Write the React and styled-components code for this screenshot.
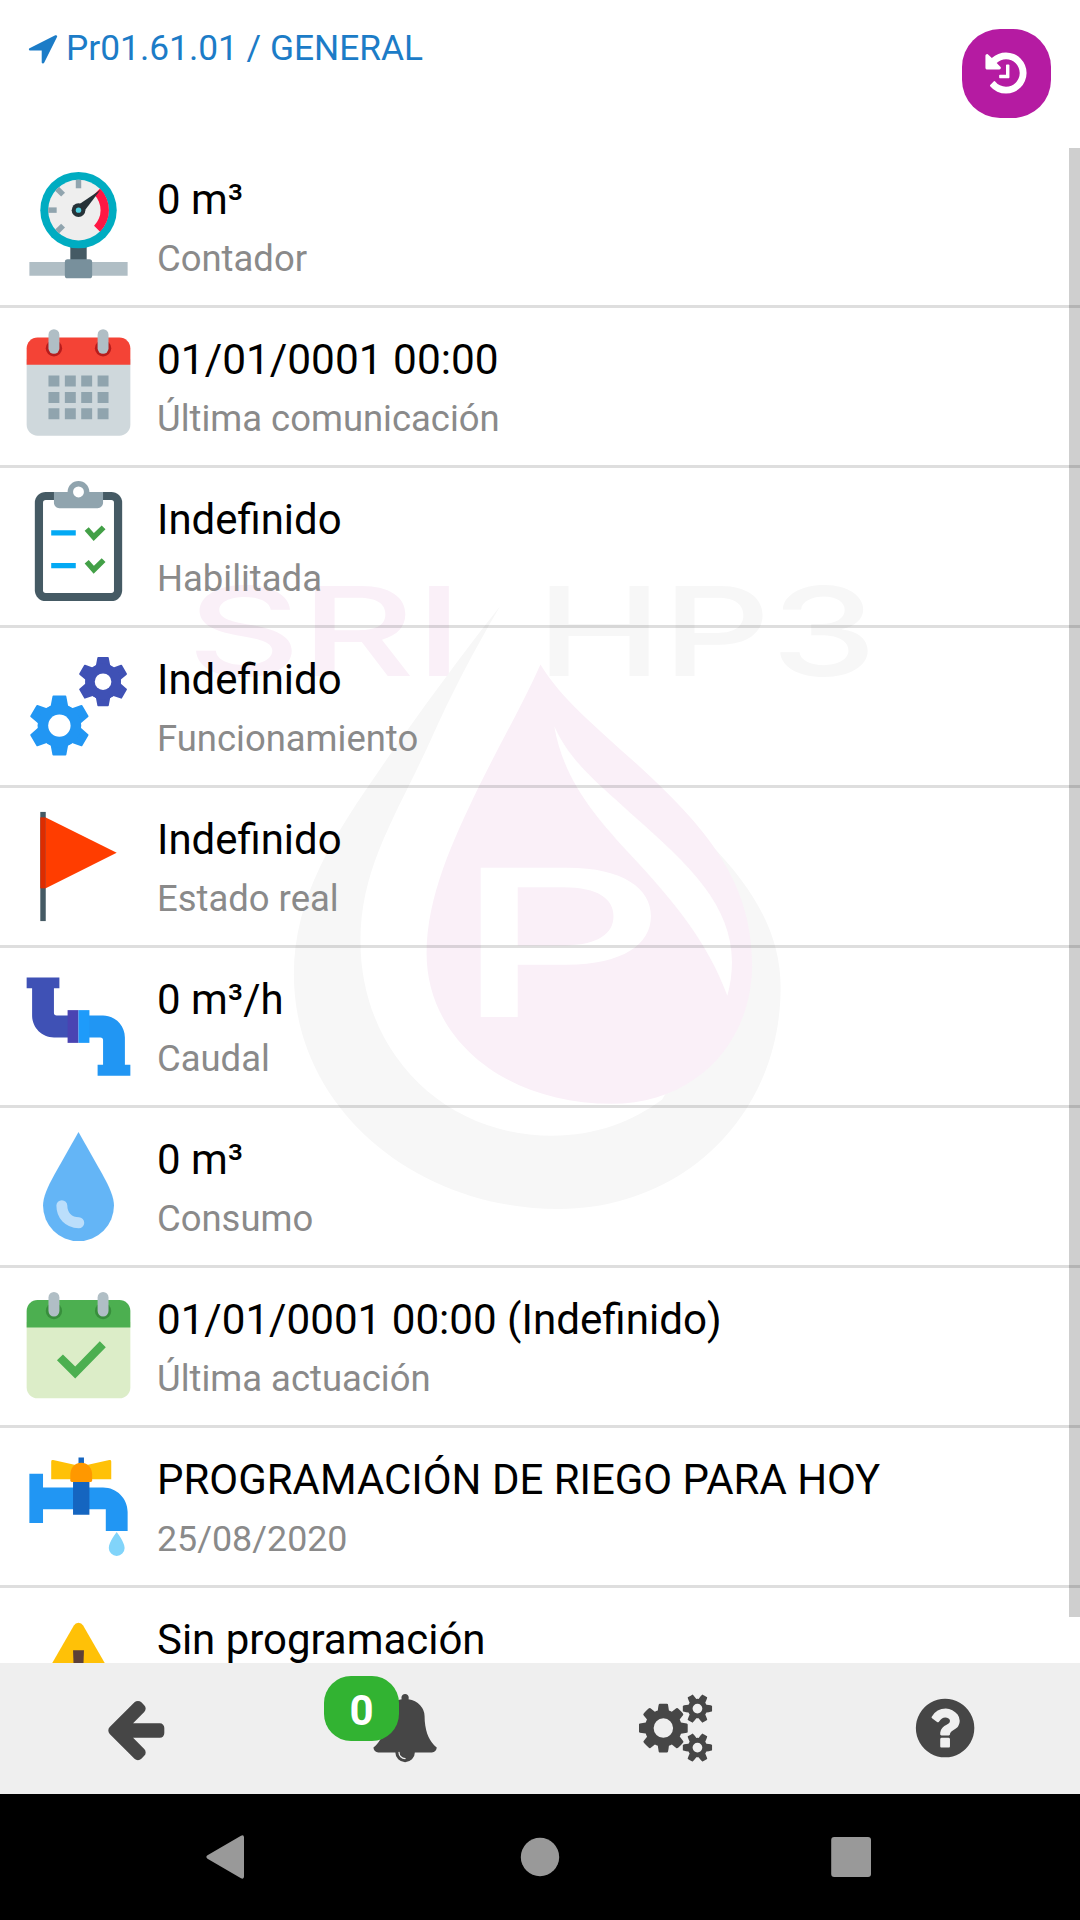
import React from "react";

import styled, { createGlobalStyle } from "styled-components";

const rows = [
 { icon: "meter", title: "0 m³", subtitle: "Contador" },
 {
  icon: "calendar",
  title: "01/01/0001 00:00",
  titleSize: 42.4,
  subtitle: "Última comunicación",
 },
 { icon: "clipboard", title: "Indefinido", subtitle: "Habilitada" },
 { icon: "gears", title: "Indefinido", subtitle: "Funcionamiento" },
 { icon: "flag", title: "Indefinido", subtitle: "Estado real" },
 { icon: "pipe", title: "0 m³/h", subtitle: "Caudal" },
 { icon: "drop", title: "0 m³", subtitle: "Consumo" },
 {
  icon: "calendarCheck",
  title: "01/01/0001 00:00 (Indefinido)",
  titleSize: 42.15,
  subtitle: "Última actuación",
 },
 {
  icon: "tap",
  title: "PROGRAMACIÓN DE RIEGO PARA HOY",
  subtitle: "25/08/2020",
  subtitleSize: 35.8,
 },
 { icon: "warning", title: "Sin programación", subtitle: "" },
];

const glyphs = {
 location:
  "M1593 349l-640 1280q-17 35-57 35-5 0-15-2-22-5-35.5-22.5t-13.5-39.5v-576h-576q-22 0-39.5-13.5t-22.5-35.5 4-42 29-30l1280-640q13-7 29-7 27 0 45 19 15 14 18.5 34.5t-6.5 39.5z",
 history:
  "M1664 896q0 156-61 298t-164 245-245 164-298 61q-172 0-327-72.5t-264-204.5q-7-10-6.5-22.5t8.5-20.5l137-138q10-9 25-9 16 2 23 12 73 95 179 147t225 52q104 0 198.5-40.5t163.5-109.5 109.5-163.5 40.5-198.5-40.5-198.5-109.5-163.5-163.5-109.5-198.5-40.5q-98 0-188 35.5t-160 101.5l137 138q31 30 14 69-17 40-59 40h-448q-26 0-45-19t-19-45v-448q0-42 40-59 39-17 69 14l130 129q107-101 244.5-156.5t284.5-55.5q156 0 298 61t245 164 164 245 61 298zm-640-288v448q0 14-9 23t-23 9h-320q-14 0-23-9t-9-23v-64q0-14 9-23t23-9h224v-352q0-14 9-23t23-9h64q14 0 23 9t9 23z",
 back: "M1664 896v128q0 53-32.5 90.5t-84.5 37.5h-704l293 294q38 36 38 90t-38 90l-75 76q-37 37-90 37-52 0-91-37l-651-652q-37-37-37-90 0-52 37-91l651-650q38-38 91-38 52 0 90 38l75 74q38 38 38 91t-38 91l-293 293h704q52 0 84.5 37.5t32.5 90.5z",
 bell: "M912 1696q0-16-16-16-59 0-101.5-42.5t-42.5-101.5q0-16-16-16t-16 16q0 73 51.5 124.5t124.5 51.5q16 0 16-16zm816-288q0 52-38 90t-90 38h-448q0 106-75 181t-181 75-181-75-75-181h-448q-52 0-90-38t-38-90q50-42 91-88t85-119.5 74.5-158.5 50-206 19.5-260q0-152 117-282.5t307-158.5q-8-19-8-39 0-40 28-68t68-28 68 28 28 68q0 20-8 39 190 28 307 158.5t117 282.5q0 139 19.5 260t50 206 74.5 158.5 85 119.5 91 88z",
 cogs: "M896 896q0-106-75-181t-181-75-181 75-75 181 75 181 181 75 181-75 75-181zm768 512q0-52-38-90t-90-38-90 38-38 90q0 53 37.5 90.5t90.5 37.5 90.5-37.5 37.5-90.5zm0-1024q0-52-38-90t-90-38-90 38-38 90q0 53 37.5 90.5t90.5 37.5 90.5-37.5 37.5-90.5zm-384 421v185q0 10-7 19.5t-16 10.5l-155 24q-11 35-32 76 34 48 90 115 7 11 7 20 0 12-7 19-23 30-82.5 89.5t-78.5 59.5q-11 0-21-7l-115-90q-37 19-77 31-11 108-23 155-7 24-30 24h-186q-11 0-20-7.5t-10-17.5l-23-153q-34-10-75-31l-118 89q-7 7-20 7-11 0-21-8-144-133-144-160 0-9 7-19 10-14 41-53t47-61q-23-44-35-82l-152-24q-10-1-17-9.5t-7-19.5v-185q0-10 7-19.5t16-10.5l155-24q11-35 32-76-34-48-90-115-7-11-7-20 0-12 7-20 22-30 82-89t79-59q11 0 21 7l115 90q34-18 77-32 11-108 23-154 7-24 30-24h186q11 0 20 7.5t10 17.5l23 153q34 10 75 31l118-89q8-7 20-7 11 0 21 8 144 133 144 160 0 8-7 19-12 16-42 54t-45 60q23 48 34 82l152 23q10 2 17 10.5t7 19.5zm640 533v140q0 16-149 31-12 27-30 52 51 113 51 138 0 4-4 7-122 71-124 71-8 0-46-47t-52-68q-20 2-30 2t-30-2q-14 21-52 68t-46 47q-2 0-124-71-4-3-4-7 0-25 51-138-18-25-30-52-149-15-149-31v-140q0-16 149-31 13-29 30-52-51-113-51-138 0-4 4-7 4-2 35-20t59-34 30-16q8 0 46 46.5t52 67.5q20-2 30-2t30 2q51-71 92-112l6-2q4 0 124 70 4 3 4 7 0 25-51 138 17 23 30 52 149 15 149 31zm0-1024v140q0 16-149 31-12 27-30 52 51 113 51 138 0 4-4 7-122 71-124 71-8 0-46-47t-52-68q-20 2-30 2t-30-2q-14 21-52 68t-46 47q-2 0-124-71-4-3-4-7 0-25 51-138-18-25-30-52-149-15-149-31v-140q0-16 149-31 13-29 30-52-51-113-51-138 0-4 4-7 4-2 35-20t59-34 30-16q8 0 46 46.5t52 67.5q20-2 30-2t30 2q51-71 92-112l6-2q4 0 124 70 4 3 4 7 0 25-51 138 17 23 30 52 149 15 149 31z",
 help: "M1024 1376v-192q0-14-9-23t-23-9h-192q-14 0-23 9t-9 23v192q0 14 9 23t23 9h192q14 0 23-9t9-23zm256-672q0-88-55.5-163t-138.5-116-170-41q-243 0-371 213-15 24 8 42l132 100q7 6 19 6 16 0 25-12 53-68 86-92 34-24 86-24 48 0 85.5 26t37.5 59q0 38-20 61t-68 45q-63 28-115.5 86.5t-52.5 125.5v36q0 14 9 23t23 9h192q14 0 23-9t9-23q0-19 21.5-49.5t54.5-49.5q32-18 49-28.5t46-35 44.5-48 28-60.5 12.5-81zm384 192q0 209-103 385.5t-279.5 279.5-385.5 103-385.5-103-279.5-279.5-103-385.5 103-385.5 279.5-279.5 385.5-103 385.5 103 279.5 279.5 103 385.5z",
};

const Glyph = ({ name, size, width = 1792 }) => (
 <GlyphSvg
  viewBox={`0 0 ${width} 1792`}
  width={(size * width) / 1792}
  height={size}
 >
  <path d={glyphs[name]} />
 </GlyphSvg>
);

const Gear = ({ x, y, scale, hole, color }) => (
 <g transform={`translate(${x} ${y}) scale(${scale})`} fill={color}>
  {[0, 60, 120, 180, 240, 300].map((angle) => (
   <path
    key={angle}
    transform={`rotate(${angle})`}
    d="M-2.2-11h4.4q.3 0 .35.3l.65 3.5L5-6h-10l1.8-1.2.65-3.5q.05-.3.35-.3z"
   />
  ))}
  <circle r="8" />
  <circle r={hole} fill="#fff" />
 </g>
);

const CalendarRings = ({ dark, light }) => (
 <>
  <circle cx="15" cy="10" r="3" fill={dark} />
  <circle cx="33" cy="10" r="3" fill={dark} />
  <rect x="13" y="3" width="4" height="9" rx="2" fill={light} />
  <rect x="31" y="3" width="4" height="9" rx="2" fill={light} />
 </>
);

const icons = {
 meter: (
  <>
   <path fill="#455a64" d="M21 30h6v7h-6z" />
   <path fill="#b0bec5" d="M6 37h36v5H6z" />
   <rect x="19" y="36" width="10" height="7" rx="1" fill="#78909c" />
   <circle cx="24" cy="18" r="14" fill="#00acc1" />
   <circle cx="24" cy="18" r="11.1" fill="#eee" />
   <g fill="#90a4ae">
    {[-135, -90, -45, 0].map((angle) => (
     <path
      key={angle}
      transform={`rotate(${angle} 24 18)`}
      d="M23 6.9h2V10h-2z"
     />
    ))}
   </g>
   <path
    fill="#ff1744"
    d="M31.9 10.1a11.2 11.2 0 0 1 0 15.8l-2.2-2.2a8 8 0 0 0 0-11.4z"
   />
   <path fill="#263238" d="M32 10.6l-6.2 8.2-2.5-2.3z" />
   <circle cx="24" cy="18" r="2.5" fill="#263238" />
   <circle cx="24" cy="18" r="1" fill="#4dd0e1" />
  </>
 ),
 calendar: (
  <>
   <path
    fill="#cfd8dc"
    d="M5 38V14h38v24c0 2.2-1.8 4-4 4H9c-2.2 0-4-1.8-4-4z"
   />
   <path fill="#f44336" d="M43 10v6H5v-6c0-2.2 1.8-4 4-4h30c2.2 0 4 1.8 4 4z" />
   <CalendarRings dark="#b71c1c" light="#b0bec5" />
   <path
    fill="#90a4ae"
    d="M13 20h4v4h-4zM19 20h4v4h-4zM25 20h4v4h-4zM31 20h4v4h-4zM13 26h4v4h-4zM19 26h4v4h-4zM25 26h4v4h-4zM31 26h4v4h-4zM13 32h4v4h-4zM19 32h4v4h-4zM25 32h4v4h-4zM31 32h4v4h-4z"
   />
  </>
 ),
 clipboard: (
  <>
   <rect x="8" y="4" width="32" height="40" rx="4" fill="#455a64" />
   <rect x="11" y="7" width="26" height="34" rx="1" fill="#fff" />
   <path
    fill="#90a4ae"
    d="M28 4c0-2.2-1.8-4-4-4s-4 1.8-4 4h-5v4c0 1.1.9 2 2 2h14c1.1 0 2-.9 2-2V4z"
   />
   <circle cx="24" cy="4" r="2" fill="#fff" />
   <path fill="#03a9f4" d="M14 18h9v2h-9zM14 30h9v2h-9z" />
   <path
    fill="none"
    stroke="#43a047"
    strokeWidth="2"
    d="M27 17.6l2.6 2.9 3.6-3.5M27 29.6l2.6 2.9 3.6-3.5"
   />
  </>
 ),
 gears: (
  <>
   <Gear x={17} y={31} scale={1} hole={4.1} color="#2196f3" />
   <Gear x={33} y={14.9} scale={0.82} hole={3.7} color="#3f51b5" />
  </>
 ),
 flag: (
  <>
   <path fill="#455a64" d="M10 4h2v40h-2z" />
   <path fill="#ff3d00" d="M12 6l26 13-26 13z" />
   <path fill="#dd2c00" d="M10 6h2v26h-2z" />
  </>
 ),
 pipe: (
  <>
   <path
    fill="#3f51b5"
    d="M5 6h12v4h-2v9q0 1 1 1h6v8h-7c-4.4 0-8-3.6-8-8V10H5z"
   />
   <path
    fill="#2196f3"
    d="M43 42H31v-4h2v-9q0-1-1-1h-6v-8h7c4.4 0 8 3.6 8 8v10h2z"
   />
   <path fill="#4a43b2" d="M20 18h4v12h-4z" />
   <path fill="#1e9bfa" d="M24 18h4v12h-4z" />
  </>
 ),
 drop: (
  <>
   <path
    fill="#64b5f6"
    d="M24 4L15.2 19.6C12.6 24.3 11 28 11 31a13 13 0 0 0 26 0c0-3-1.6-6.7-4.2-11.4z"
   />
   <path
    fill="none"
    stroke="#bbdefb"
    strokeWidth="4"
    strokeLinecap="round"
    d="M17.9 31c0 3.6 2.4 6.2 6.2 6.3"
   />
  </>
 ),
 calendarCheck: (
  <g transform="translate(0 1)">
   <path
    fill="#dcedc8"
    d="M5 38V14h38v24c0 2.2-1.8 4-4 4H9c-2.2 0-4-1.8-4-4z"
   />
   <path fill="#4caf50" d="M43 10v6H5v-6c0-2.2 1.8-4 4-4h30c2.2 0 4 1.8 4 4z" />
   <CalendarRings dark="#388e3c" light="#b0bec5" />
   <path
    fill="#4caf50"
    d="M16.1 28l2.2-2.1 4.5 4.4 9-9.2L34 23.3 22.8 34.7z"
   />
  </g>
 ),
 tap: (
  <>
   <path fill="#2196f3" d="M6 12h5v5h22c5 0 9 4 9 9v7h-8v-8H11v5H6z" />
   <path fill="#1565c0" d="M22 14h6v13h-6zM24 6h2v4h-2z" />
   <path
    fill="#ffc107"
    d="M14 7.5q0-.6.7-.5l7.8 1.7h5L35.3 7q.7-.1.7.5V14H14z"
   />
   <path
    fill="#ff9800"
    d="M25 8c-2.6 0-4 2.2-4 4.4v2.1q0 .5.5.5h7q.5 0 .5-.5v-2.1C29 10.2 27.6 8 25 8z"
   />
   <path
    fill="#81d4fa"
    d="M38 33.3s-2.9 3.6-2.9 5.900a2.9 2.9 0 0 0 5.8 0c0-2.300-2.900-5.900-2.900-5.900z"
   />
  </>
 ),
 warning: (
  <>
   <path
    fill="#ffc107"
    d="M22.3 9q.6-1 1.7-1t1.7 1l17.6 30.5q1 2.5-1.7 2.5H6.4q-2.7 0-1.7-2.5z"
   />
   <path fill="#5d4037" d="M22 18h4l-.5 14h-3z" />
  </>
 ),
};

const Watermark = () => (
 <WatermarkSvg viewBox="0 0 720 660" width="720" height="660">
  <WatermarkText
   x="7"
   y="115.5"
   fontSize="124"
   textLength="276"
   lengthAdjust="spacingAndGlyphs"
   fill="#faf0f8"
  >
   SRI
  </WatermarkText>
  <WatermarkText
   x="356"
   y="115.5"
   fontSize="124"
   textLength="341"
   lengthAdjust="spacingAndGlyphs"
   fill="#f7f7f7"
  >
   HP3
  </WatermarkText>
  <g transform="scale(.4592 .4209)">
   <path
    fill="#f7f7f7"
    d="M697 110C640 215 590 320 545 430C470 610 393 730 393 905C393 1170 575 1368 810 1368C905 1368 985 1335 1050 1282L1225 960C1215 850 1190 770 1150 670C1260 790 1308 900 1308 1015C1308 1320 1095 1542 825 1542C510 1542 248 1300 248 985C248 800 335 655 440 490C520 365 620 215 697 110z"
   />
   <path
    fill="#faf0f8"
    d="M785 248C830 330 910 400 1000 490C1140 630 1246 760 1246 960C1246 1150 1120 1292 940 1292C710 1292 537 1140 537 935C537 800 595 665 650 540C700 430 745 345 785 248z"
   />
   <path
    fill="#fff"
    d="M815 395C850 480 910 530 985 605C1110 725 1202 820 1202 955Q1202 995 1192 1035C1150 910 1075 810 985 705C900 605 835 520 815 395z"
   />
  </g>
  <WatermarkText
   x="274"
   y="457"
   fontSize="205"
   textLength="213"
   lengthAdjust="spacingAndGlyphs"
   fill="#fff"
  >
   P
  </WatermarkText>
 </WatermarkSvg>
);

const App = () => {
 return (
  <>
   <GlobalStyle />
   <Screen>
    <Header>
     <Location>
      <Glyph name="location" size={36} />
      Pr01.61.01 / GENERAL
     </Location>
     <HistoryButton>
      <Glyph name="history" size={48} />
     </HistoryButton>
    </Header>
    <Content>
     <Watermark />
     {rows.map((row, index) => (
      <Row key={index}>
       <RowIcon viewBox="0 0 48 48">{icons[row.icon]}</RowIcon>
       <RowText>
        <Title $size={row.titleSize}>{row.title}</Title>
        <Subtitle $size={row.subtitleSize}>{row.subtitle}</Subtitle>
       </RowText>
      </Row>
     ))}
     <ScrollThumb />
    </Content>
    <TabBar>
     <Tab>
      <Glyph name="back" size={68.2} />
     </Tab>
     <Tab>
      <Glyph name="bell" size={68.2} />
      <Badge>0</Badge>
     </Tab>
     <Tab $shift={2}>
      <Glyph name="cogs" size={68.2} width={1920} />
     </Tab>
     <Tab>
      <Glyph name="help" size={68.2} />
     </Tab>
    </TabBar>
    <SystemBar>
     <SystemIcon viewBox="0 0 44 44">
      <path d="M1.5 20.3L35 .7q3-1.2 3 1.8v39q0 3-3 1.8L1.5 23.7q-2.3-1.7 0-3.4z" />
     </SystemIcon>
     <SystemIcon viewBox="0 0 44 44">
      <circle cx="22" cy="22" r="19.2" />
     </SystemIcon>
     <SystemIcon viewBox="0 0 44 44">
      <rect x="1.2" y="2" width="39.8" height="40" rx="3" />
     </SystemIcon>
    </SystemBar>
   </Screen>
  </>
 );
};

const GlobalStyle = createGlobalStyle`
 * {
  box-sizing: border-box;
 }

 body {
  margin: 0;
  background: #fff;
  font-family: Roboto, "Liberation Sans", sans-serif;
 }
`;

const Screen = styled.div`
 display: flex;
 flex-direction: column;
 width: 1080px;
 height: 1920px;
 overflow: hidden;
 background: #fff;
`;

const Header = styled.header`
 display: flex;
 justify-content: space-between;
 align-items: flex-start;
 height: 148px;
 padding: 29px 29px 0 25px;
`;

const Location = styled.div`
 display: flex;
 align-items: center;
 gap: 5px;
 height: 38px;
 font-size: 35.3px;
 color: #1c7cc7;
`;

const HistoryButton = styled.button`
 display: flex;
 align-items: center;
 justify-content: center;
 width: 89px;
 height: 89px;
 padding: 0 1px 2px 0;
 border: none;
 border-radius: 38px;
 background: #b51ba2;
 color: #fff;
`;

const GlyphSvg = styled.svg`
 flex: none;
 fill: currentColor;
`;

const Content = styled.main`
 position: relative;
 flex: 1;
 min-height: 0;
 overflow: hidden;
`;

const WatermarkSvg = styled.svg`
 position: absolute;
 top: 412px;
 left: 180px;
 overflow: visible;
`;

const WatermarkText = styled.text`
 font-family: Inter, sans-serif;
 font-weight: 450;
`;

const Row = styled.div`
 position: relative;
 display: flex;
 gap: 13px;
 height: 160px;
 padding: 13px;
 border-bottom: 3px solid rgba(0, 0, 0, 0.13);
`;

const RowIcon = styled.svg`
 flex: none;
 width: 131px;
 height: 131px;
`;

const RowText = styled.div`
 padding-top: 14px;
 white-space: nowrap;
`;

const Title = styled.div`
 font-size: ${({ $size }) => $size || 41.95}px;
 line-height: 50px;
 color: #000;
`;

const Subtitle = styled.div`
 margin-top: 13px;
 font-size: ${({ $size }) => $size || 36.45}px;
 line-height: 42px;
 color: #8a8a8a;
`;

const ScrollThumb = styled.div`
 position: absolute;
 top: 0;
 right: 0;
 width: 11px;
 height: 1469px;
 background: rgba(0, 0, 0, 0.19);
`;

const TabBar = styled.nav`
 display: grid;
 grid-template-columns: repeat(4, 1fr);
 height: 131px;
 background: #efefef;
 color: #464646;
`;

const Tab = styled.div`
 position: relative;
 display: flex;
 align-items: center;
 justify-content: center;
 padding-left: ${({ $shift }) => $shift || 0}px;
`;

const Badge = styled.span`
 position: absolute;
 top: 13px;
 left: 54px;
 width: 75px;
 height: 65px;
 border-radius: 27px;
 background: #32b332;
 color: #fff;
 font-size: 42px;
 font-weight: bold;
 line-height: 69px;
 text-align: center;
`;

const SystemBar = styled.footer`
 display: grid;
 grid-template-columns: repeat(3, 312px);
 justify-content: center;
 justify-items: center;
 align-items: center;
 height: 126px;
 background: #000;
`;

const SystemIcon = styled.svg`
 width: 44px;
 height: 44px;
 fill: #999;
`;

export default App;
